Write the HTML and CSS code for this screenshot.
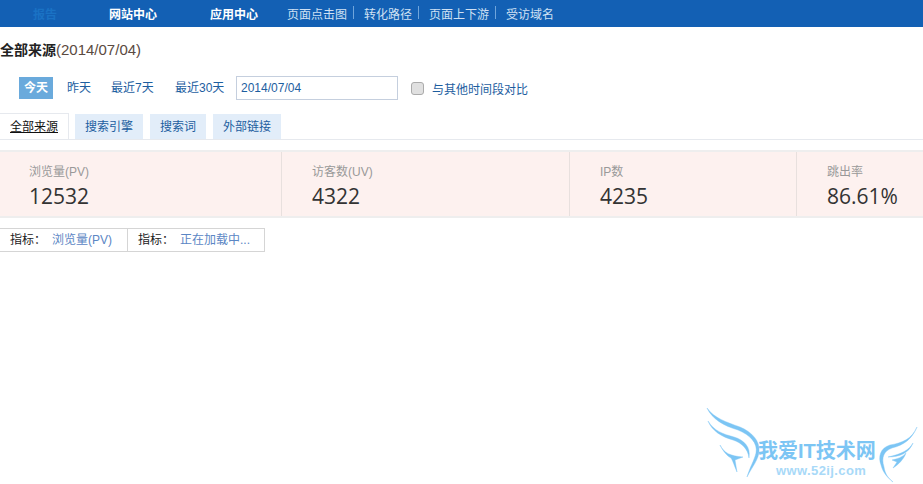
FILE: index.html
```html
<!DOCTYPE html>
<html lang="zh">
<head>
<meta charset="utf-8">
<title>全部来源</title>
<link rel="stylesheet" href="styles.css">
</head>
<body>
<nav class="nav">
  <a class="nav-current">报告</a>
  <a class="nav-main nav-site">网站中心</a>
  <a class="nav-main nav-app">应用中心</a>
  <ul class="nav-sub">
    <li class="sep">页面点击图</li>
    <li class="sep">转化路径</li>
    <li class="sep">页面上下游</li>
    <li>受访域名</li>
  </ul>
</nav>
<h1 class="title"><b>全部来源</b>(2014/07/04)</h1>
<div class="dates">
  <a class="date-btn active">今天</a>
  <a class="date-btn">昨天</a>
  <a class="date-btn">最近7天</a>
  <a class="date-btn">最近30天</a>
  <input class="date-input" type="text" value="2014/07/04">
  <label class="compare"><input class="compare-box" type="checkbox"><span>与其他时间段对比</span></label>
</div>
<div class="tabs">
  <a class="tab active">全部来源</a>
  <a class="tab">搜索引擎</a>
  <a class="tab">搜索词</a>
  <a class="tab">外部链接</a>
</div>
<section class="stats">
  <div class="stat s1"><div class="label">浏览量(PV)</div><div class="value">12532</div></div>
  <div class="stat s2"><div class="label">访客数(UV)</div><div class="value">4322</div></div>
  <div class="stat s3"><div class="label">IP数</div><div class="value">4235</div></div>
  <div class="stat s4"><div class="label">跳出率</div><div class="value">86.61%</div></div>
</section>
<div class="metrics">
  <div class="metric m1">指标：<a>浏览量(PV)</a></div>
  <div class="metric m2">指标：<a>正在加载中...</a></div>
</div>
<div class="watermark">
  <svg class="wings" width="212" height="76" viewBox="0 0 212 76">
    <g class="wing-shapes">
      <path d="M1 1C6 12 18 19 32 23C44 28 52 36 50 46C48 54 44 60 41 70C46 60 53 52 53 44C54 34 46 25 34 20C20 15 8 11 1 1Z"/>
      <path d="M2 14C6 24 16 30 27 33C36 36 42 42 43 51C45 40 38 33 28 30C17 27 8 24 2 14Z"/>
      <path d="M14 38C18 46 24 49 37 50L29 53L31 65C28 58 27 54 25 51C21 49 17 44 14 38Z"/>
      <path d="M211 20C206 32 196 36 184 38C174 41 172 50 175 58C177 66 182 71 187 75C181 70 179 66 178 60C175 50 178 44 186 41C198 38 206 32 211 20Z"/>
      <path d="M207 36C203 43 196 47 182 50C194 50 203 46 207 36Z"/>
      <path d="M200 46C197 50 191 52 186 53L191 55L187 61C192 58 198 52 200 46Z"/>
    </g>
  </svg>
  <div class="wm-title">我爱IT技术网</div>
  <div class="wm-url">www.52ij.com</div>
</div>
</body>
</html>
```
FILE: styles.css
```css
* { box-sizing: border-box; }
html, body { margin: 0; padding: 0; }
body {
  position: relative;
  height: 484px;
  overflow: hidden;
  background: #fff;
  font-family: "Liberation Sans", "Noto Sans CJK SC", sans-serif;
  font-size: 12px;
  color: #333;
}
.nav {
  display: flex;
  align-items: center;
  height: 27px;
  padding-left: 33px;
  background: #1360b4;
  color: #fff;
}
.nav-current { color: #1a72c4; font-weight: 700; }
.nav-main { font-weight: 700; }
.nav-site { margin-left: 52px; }
.nav-app { margin-left: 53px; }
.nav-sub {
  display: flex;
  gap: 17px;
  margin: 0 0 0 29px;
  padding: 0;
  list-style: none;
  color: #cfe0f3;
}
.nav-sub .sep { position: relative; }
.nav-sub .sep::after {
  content: "";
  position: absolute;
  top: 1px;
  right: -7px;
  width: 1px;
  height: 13px;
  background: #6fa5dc;
}
.title {
  margin: 14px 0 0;
  font-size: 15px;
  font-weight: 400;
  line-height: 17px;
  color: #5b4a42;
}
.title b { font-size: 14px; color: #222; }
.dates {
  display: flex;
  align-items: center;
  height: 24px;
  margin-top: 17px;
  padding-left: 19px;
}
.date-btn {
  height: 22px;
  line-height: 22px;
  color: #1d5e9f;
}
.date-btn.active {
  width: 34px;
  margin-right: 14px;
  background: #6aaadc;
  color: #fff;
  font-weight: 700;
  text-align: center;
}
.date-btn:nth-child(2) { margin-right: 20px; }
.date-btn:nth-child(3) { margin-right: 20px; width: 44px; }
.date-btn:nth-child(4) { width: 51px; margin-right: 10px; }
.date-input {
  width: 162px;
  height: 24px;
  padding: 0 4px;
  border: 1px solid #c5cfde;
  font: 12px "Liberation Sans", sans-serif;
  color: #1d5e9f;
  outline: 0;
}
.compare { display: flex; align-items: center; margin-left: 13px; color: #1d5e9f; }
.compare-box {
  appearance: none;
  width: 13px;
  height: 13px;
  margin: 0 8px 0 0;
  border: 1px solid #ababab;
  border-radius: 3px;
  background: #e0e0e0;
}
.tabs {
  display: flex;
  align-items: flex-end;
  gap: 7px;
  height: 26px;
  margin-top: 14px;
  border-bottom: 1px solid #e6e9ee;
}
.tab {
  height: 25px;
  padding: 0 10px;
  line-height: 26px;
  background: #e2edf9;
  color: #1d5e9f;
}
.tab.active {
  height: 26px;
  margin-right: -1px;
  width: 69px;
  background: #fff;
  border: 1px solid #e6e9ee;
  border-left: 0;
  border-bottom: 0;
  color: #111;
  text-decoration: underline;
}
.stats {
  display: flex;
  height: 68px;
  margin-top: 10px;
  border-top: 2px solid #eee;
  border-bottom: 2px solid #eee;
  background: #fdf1ef;
}
.stat { padding: 12px 0 0 29px; border-right: 1px solid #e8e0de; }
.s1 { width: 282px; }
.s2 { width: 288px; padding-left: 30px; }
.s3 { width: 227px; padding-left: 30px; }
.s4 { flex: 1; padding-left: 30px; border-right: 0; }
.label { line-height: 16px; color: #999; }
.value {
  margin-top: 3px;
  font-family: "Open Sans", sans-serif;
  font-size: 21px;
  line-height: 26px;
  color: #333;
}
.metrics { display: flex; margin-top: 10px; }
.metric {
  height: 24px;
  padding-left: 10px;
  border: 1px solid #d5d5d5;
  line-height: 23px;
  color: #222;
}
.metric a { margin-left: 6px; color: #5b86c4; }
.m1 { width: 128px; border-left: 0; }
.m2 { width: 137px; border-left: 0; }
.watermark {
  position: absolute;
  left: 706px;
  top: 407px;
  width: 212px;
  height: 76px;
}
.wings { position: absolute; left: 0; top: 0; }
.wing-shapes { fill: #7cc5f4; stroke: #7cc5f4; stroke-width: 0.4; }
.wm-title {
  position: absolute;
  left: 52px;
  top: 32px;
  font-size: 20px;
  line-height: 24px;
  font-weight: 700;
  white-space: nowrap;
  color: #7cc5f4;
}
.wm-url {
  position: absolute;
  left: 70px;
  top: 57px;
  font-size: 13px;
  line-height: 14px;
  font-weight: 700;
  letter-spacing: 0.4px;
  white-space: nowrap;
  color: #a8d9f8;
}
```
